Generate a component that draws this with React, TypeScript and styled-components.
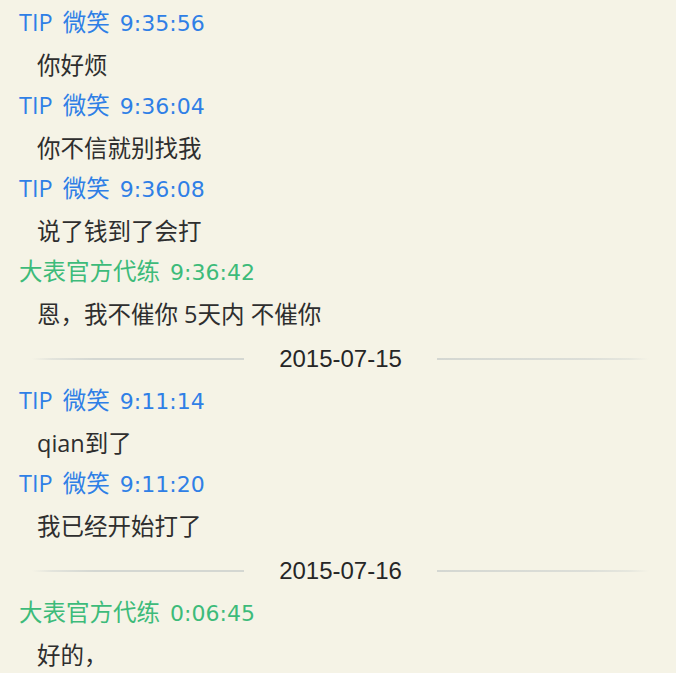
import React from 'react';
import styled, { createGlobalStyle } from 'styled-components';

type Entry =
  | { kind: 'msg'; from: 'tip' | 'shop'; name: string; time: string; text: string }
  | { kind: 'date'; date: string };

const log: Entry[] = [
  { kind: 'msg', from: 'tip', name: 'TIP 微笑', time: '9:35:56', text: '你好烦' },
  { kind: 'msg', from: 'tip', name: 'TIP 微笑', time: '9:36:04', text: '你不信就别找我' },
  { kind: 'msg', from: 'tip', name: 'TIP 微笑', time: '9:36:08', text: '说了钱到了会打' },
  { kind: 'msg', from: 'shop', name: '大表官方代练', time: '9:36:42', text: '恩，我不催你 5天内 不催你' },
  { kind: 'date', date: '2015-07-15' },
  { kind: 'msg', from: 'tip', name: 'TIP 微笑', time: '9:11:14', text: 'qian到了' },
  { kind: 'msg', from: 'tip', name: 'TIP 微笑', time: '9:11:20', text: '我已经开始打了' },
  { kind: 'date', date: '2015-07-16' },
  { kind: 'msg', from: 'shop', name: '大表官方代练', time: '0:06:45', text: '好的，' },
];

const GlobalStyle = createGlobalStyle`
  html, body {
    margin: 0;
    padding: 0;
    background: #f5f3e6;
  }
  body {
    font-family: "Open Sans", "Noto Sans CJK SC", sans-serif;
  }
`;

const App = () => {
  return (
    <>
      <GlobalStyle />
      <History>
        {log.map((item, i) =>
          item.kind === 'date' ? (
            <Divider key={i}>
              <Rule side="left" />
              <DateText>{item.date}</DateText>
              <Rule side="right" />
            </Divider>
          ) : (
            <Message key={i}>
              <Header from={item.from}>
                <Sender>{item.name}</Sender> <Time>{item.time}</Time>
              </Header>
              <Body>{item.text}</Body>
            </Message>
          ),
        )}
      </History>
    </>
  );
};

export default App;

const History = styled.div`
  display: flex;
  flex-direction: column;
  width: 676px;
  height: 673px;
  padding-top: 2px;
  box-sizing: border-box;
  overflow: hidden;
  background: #f5f3e6;
  font-size: 23.5px;
`;
const Message = styled.div`
  display: flex;
  flex-direction: column;
`;
const Header = styled.div<{ from: 'tip' | 'shop' }>`
  height: 40px;
  line-height: 40px;
  padding-left: 19px;
  white-space: nowrap;
  word-spacing: 4px;
  color: ${({ from }) => (from === 'tip' ? '#2f7fe6' : '#3dbb7a')};
`;
const Sender = styled.span``;
const Time = styled.span`
  font-family: "DejaVu Sans", sans-serif;
  font-size: 22px;
  word-spacing: 0;
`;
const Body = styled.div`
  height: 40px;
  line-height: 40px;
  margin-top: 3px;
  padding-left: 37px;
  white-space: nowrap;
  color: #2e2e2e;
`;
const Divider = styled.div`
  display: flex;
  align-items: center;
  gap: 35px;
  height: 43px;
  padding: 3px 27px 0 32px;
`;
const Rule = styled.div<{ side: 'left' | 'right' }>`
  flex: 1;
  height: 2px;
  background: ${({ side }) =>
    side === 'left'
      ? 'linear-gradient(to right, rgba(214,216,210,0) 0, #e3e4dc 20px, #d4d7d2 62px, #d4d7d2 100%)'
      : 'linear-gradient(to left, rgba(214,216,210,0) 0, #e6e7de 20px, #dcded8 62px, #d4d7d2 100%)'};
`;
const DateText = styled.span`
  font-family: "Liberation Sans", Arial, sans-serif;
  font-size: 24px;
  color: #262626;
  line-height: 43px;
`;
